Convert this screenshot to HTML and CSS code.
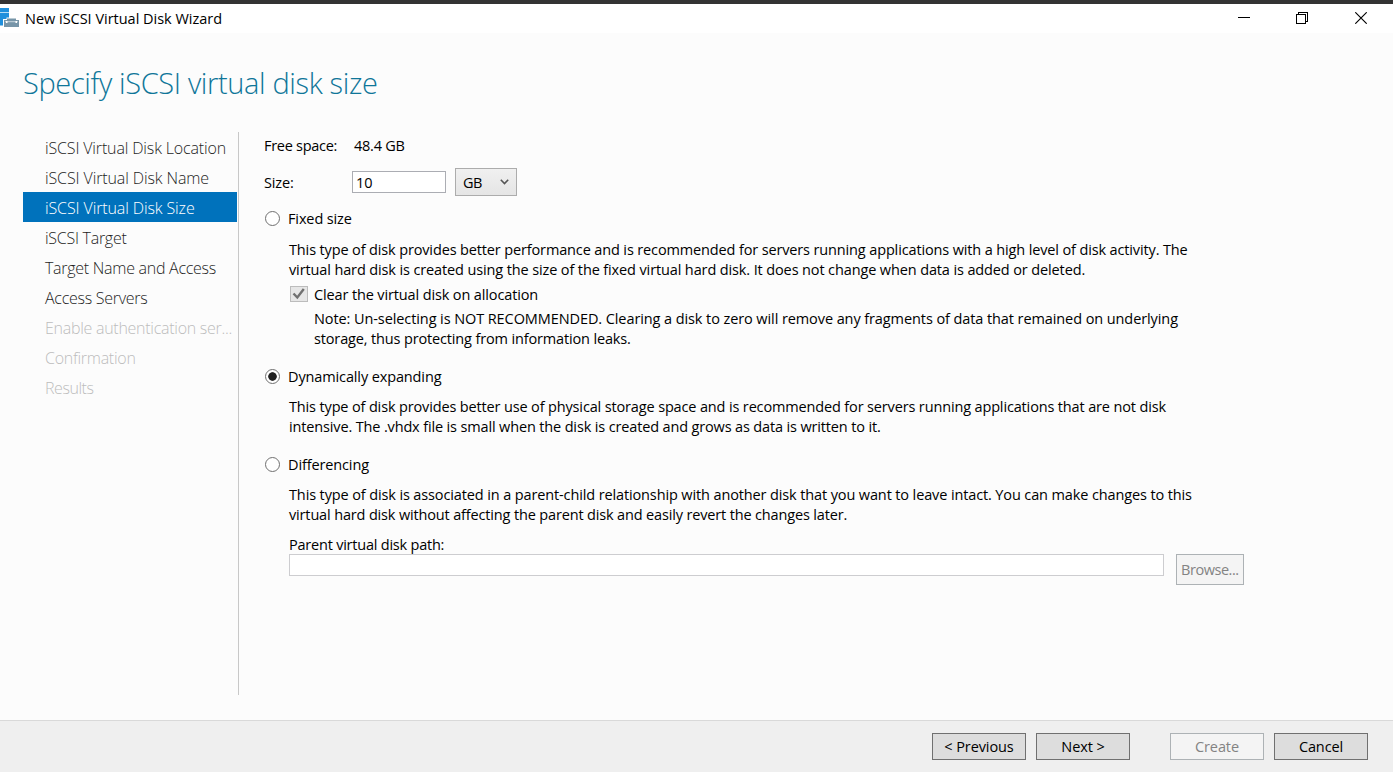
FILE: index.html
```
<!DOCTYPE html>
<html lang="en">
<head>
<meta charset="utf-8">
<title>New iSCSI Virtual Disk Wizard</title>
<link rel="stylesheet" href="styles.css">
</head>
<body>
<div class="window">
  <header class="titlebar">
    <svg class="app-icon" width="20" height="20" viewBox="0 0 20 20">
      <rect x="0" y="0" width="9" height="17.500" fill="#1f8fdc"/>
      <rect x="0" y="4" width="9" height="1" fill="#b5dcf5"/>
      <path d="M3 19.500V11H6.500V9.500H16.500V11H20V19.500Z" fill="#fff"/>
      <rect x="7" y="10.500" width="9" height="2" fill="#7795a8"/>
      <rect x="4" y="12" width="15" height="7" fill="#7795a8"/>
      <rect x="5" y="13.200" width="13" height="1" fill="#c9d6de"/>
      <path d="M6 13H7.500V15H6ZM15.500 13H17V15H15.500Z" fill="#fff"/>
    </svg>
    <span class="caption">New iSCSI Virtual Disk Wizard</span>
    <div class="controls">
      <svg width="12" height="12" viewBox="0 0 12 12" shape-rendering="crispEdges"><path d="M0 5.500H12" stroke="#000"/></svg>
      <svg width="12" height="12" viewBox="0 0 12 12" shape-rendering="crispEdges" fill="none" stroke="#000"><path d="M.5 2.500H9.500V11.500H.5ZM2.500 2.500V.5H11.500V9.500H9.500"/></svg>
      <svg class="close" width="12" height="12" viewBox="0 0 12 12"><path d="M.3.3L11.700 11.700M11.700.3L.3 11.700" stroke="#000" stroke-width="1.150"/></svg>
    </div>
  </header>

  <h1 class="heading">Specify iSCSI virtual disk size</h1>

  <main class="content">
    <nav class="steps">
      <a class="step location">iSCSI Virtual Disk Location</a>
      <a class="step">iSCSI Virtual Disk Name</a>
      <a class="step current">iSCSI Virtual Disk Size</a>
      <a class="step tight">iSCSI Target</a>
      <a class="step tight">Target Name and Access</a>
      <a class="step tight">Access Servers</a>
      <a class="step tight disabled">Enable authentication ser...</a>
      <a class="step tight disabled">Confirmation</a>
      <a class="step tighter disabled">Results</a>
    </nav>

    <section class="form">
      <div class="row free"><span class="label free-label">Free space:</span><span class="free-value">48.4 GB</span></div>
      <div class="row size">
        <span class="label">Size:</span>
        <div class="size-input">10</div>
        <div class="combo"><span class="unit">GB</span>
          <svg width="9" height="6" viewBox="0 0 9 6"><path d="M.8.8L4.500 4.500L8.200.8" fill="none" stroke="#555" stroke-width="1.600"/></svg>
        </div>
      </div>

      <div class="option"><i class="radio"></i><span>Fixed size</span></div>
      <div class="desc fixed">
        <p class="l-fixed1">This type of disk provides better performance and is recommended for servers running applications with a high level of disk activity. The</p>
        <p>virtual hard disk is created using the size of the fixed virtual hard disk. It does not change when data is added or deleted.</p>
        <div class="check-row">
          <span class="check"><svg width="16" height="14" viewBox="0 0 16 14"><path d="M2.500 6.500L6.300 10.500L12.800 2" fill="none" stroke="#707070" stroke-width="2.400"/></svg></span>
          <span>Clear the virtual disk on allocation</span>
        </div>
        <div class="note">
          <p class="l-note">Note: Un-selecting is NOT RECOMMENDED. Clearing a disk to zero will remove any fragments of data that remained on underlying</p>
          <p class="l-wide">storage, thus protecting from information leaks.</p>
        </div>
      </div>

      <div class="option dynamic"><i class="radio on"></i><span>Dynamically expanding</span></div>
      <div class="desc">
        <p class="l-wide">This type of disk provides better use of physical storage space and is recommended for servers running applications that are not disk</p>
        <p class="l-wide">intensive. The .vhdx file is small when the disk is created and grows as data is written to it.</p>
      </div>

      <div class="option differencing"><i class="radio"></i><span>Differencing</span></div>
      <div class="desc">
        <p>This type of disk is associated in a parent-child relationship with another disk that you want to leave intact. You can make changes to this</p>
        <p class="l-leave">virtual hard disk without affecting the parent disk and easily revert the changes later.</p>
        <p class="path-label">Parent virtual disk path:</p>
        <div class="path-row"><div class="path-input"></div><div class="browse">Browse...</div></div>
      </div>
    </section>
  </main>

  <footer class="footer">
    <div class="button">&lt; Previous</div>
    <div class="button next">Next &gt;</div>
    <div class="button off">Create</div>
    <div class="button">Cancel</div>
  </footer>
</div>
</body>
</html>
```
FILE: styles.css
```
* { box-sizing: border-box; }
body { margin: 0; font: 14.5px/20px "Open Sans", "Noto Sans", sans-serif; color: #000; }
p { margin: 0; white-space: nowrap; }
svg { display: block; flex: none; }

.window {
  display: flex; flex-direction: column;
  width: 1393px; height: 772px;
  background: #fcfcfc;
  border-top: 4px solid #333;
  overflow: hidden;
}
.titlebar {
  display: flex; align-items: flex-start;
  height: 29px; padding-right: 26px;
  background: #fff;
}
.app-icon { margin-top: 4px; }
.caption { margin: 5px 0 0 5px; letter-spacing: -.018px; }
.controls { display: flex; gap: 46px; margin: 8px 0 0 auto; }
.close { margin-left: 1px; }

.heading {
  margin: 30px 0 0 23px; height: 40px;
  font-size: 29px; line-height: 40px; font-weight: 300;
  letter-spacing: -.36px; color: #0f7699;
}

.content { display: flex; height: 563px; margin: 29px 0 0 23px; }
.steps { width: 216px; border-right: 1px solid #c8c8c8; flex: none; }
.step {
  display: block; width: 214px; height: 30px; padding: 1px 0 0 22px;
  font-size: 16px; line-height: 30px; font-weight: 300;
  letter-spacing: -.11px; white-space: nowrap; color: #1e1e1e;
}
.step.location { letter-spacing: -.15px; }
.step.current { background: #0072bc; color: #fff; }
.step.tight { letter-spacing: -.27px; }
.step.tighter { letter-spacing: -.45px; }
.step.disabled { color: #bdbdbd; }

.form { padding: 4px 0 0 25px; letter-spacing: -.124px; }
.row { display: flex; }
.label { width: 88px; }
.free-label { width: 90px; letter-spacing: -.28px; }
.free-value { letter-spacing: -.25px; }
.size { height: 28px; margin-top: 12px; align-items: flex-start; }
.size .label { padding-top: 5px; }
.size-input {
  width: 94px; height: 22px; margin-top: 3px; padding: 1px 0 0 3px;
  border: 1px solid #abadb3; background: #fff; letter-spacing: -.1px;
}
.combo {
  display: flex; align-items: center; justify-content: space-between;
  width: 62px; height: 28px; margin-left: 9px; padding: 0 7px 0 7px;
  border: 1px solid #acacac;
  background: linear-gradient(#f0f0f0, #e5e5e5);
}
.unit { padding-top: 2px; letter-spacing: -.5px; }
.combo svg { margin-bottom: 1px; }

.option { display: flex; height: 20px; margin-top: 13px; }
.radio {
  width: 15px; height: 15px; margin: 2px 8px 0 1px; flex: none;
  border: 1px solid #707070; border-radius: 50%; background: #fff;
}
.radio.on { background: radial-gradient(circle, #212121 3.900px, #fff 4.600px); }
.desc { margin: 10px 0 0 25px; }
.desc.fixed { margin-top: 11px; }
.dynamic { margin-top: 18px; }
.differencing { margin-top: 18px; }
.check-row { display: flex; margin-top: 5px; height: 20px; letter-spacing: -.13px; }
.check {
  width: 18px; height: 16px; margin: 1px 6px 0 1px;
  border: 1px solid #bcbcbc; background: #e6e6e6;
}
.note { margin: 4px 0 0 25px; }
.l-fixed1 { letter-spacing: -.137px; }
.l-note { letter-spacing: -.09px; }
.l-wide { letter-spacing: -.146px; }
.l-leave { letter-spacing: -.154px; }
.path-label { height: 19px; margin-top: 10px; letter-spacing: -.22px; }
.path-row { display: flex; align-items: flex-start; }
.path-input { width: 875px; height: 22px; border: 1px solid #cdcdd0; background: #fff; }
.browse {
  width: 68px; height: 31px; margin-left: 12px; padding: 5px 0 0 4px;
  border: 1px solid #adb2b5; background: #f4f4f4;
  color: #838383; letter-spacing: -.45px;
}

.footer {
  display: flex; height: 52px; margin-top: auto; padding: 12px 25px 0 0;
  justify-content: flex-end; gap: 10px;
  background: #efefef; border-top: 1px solid #d9d9d9;
}
.button {
  width: 94px; height: 27px; padding-top: 3px;
  border: 1px solid #707070; background: #ddd; text-align: center;
  letter-spacing: -.1px;
}
.button.next { margin-right: 30px; }
.button.off { border-color: #adb2b5; background: #f4f4f4; color: #838383; }
```
